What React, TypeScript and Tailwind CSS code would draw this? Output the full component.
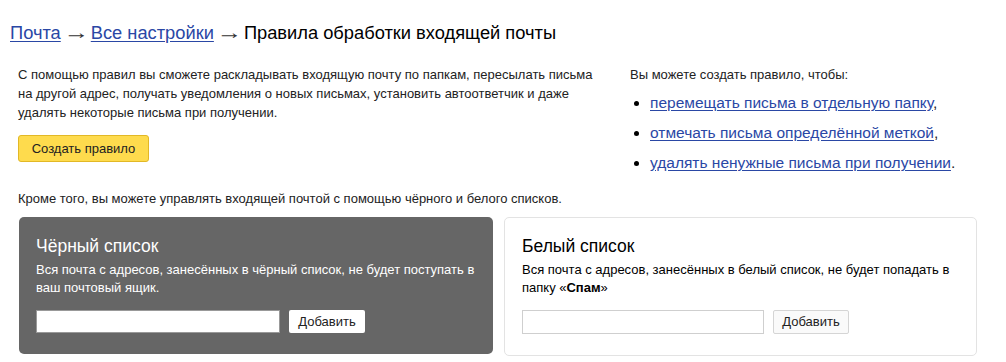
import React from 'react';

const font = { fontFamily: '"Liberation Sans", Arial, sans-serif' };

function ListCard({
  dark,
  title,
  children,
}: {
  dark?: boolean;
  title: string;
  children: React.ReactNode;
}) {
  return (
    <div
      className={
        dark
          ? 'w-[474px] h-[137px] rounded-[5px] bg-[#666666] px-[17px] pt-[18px] text-white'
          : 'w-[473px] h-[139px] rounded-[5px] border border-[#e3e3e3] bg-white px-[17px] pt-[17px] text-black'
      }
    >
      <h2 className="text-[17.5px] leading-[22px]">{title}</h2>
      <p className="mt-[4px] text-[13px] leading-[18px]">{children}</p>
      <div className="mt-[13px] flex items-center gap-[9px]">
        <input
          className={
            dark
              ? 'h-[23px] w-[244px] bg-white border border-[#999] outline-none'
              : 'h-[24px] w-[242px] bg-white border border-[#cfcfcf] outline-none'
          }
        />
        <button
          className={
            dark
              ? 'h-[23px] w-[76px] rounded-[2px] bg-white text-[13px] text-[#222]'
              : 'h-[24px] w-[76px] rounded-[2px] border border-[#d5d5d5] bg-[#fafafa] text-[13px] text-[#222]'
          }
        >
          Добавить
        </button>
      </div>
    </div>
  );
}

function Arrow() {
  return <span className="inline-block w-[30px] scale-x-[1.4] text-center text-[#333]">→</span>;
}

export default function App() {
  const linkCls = 'text-[#2a47a5] underline underline-offset-[2px]';
  return (
    <div className="w-[1006px] h-[362px] bg-white text-[#222]" style={font}>
      <div className="pl-[10px] pt-[22px] text-[18.3px] leading-[22px] text-black">
        <a className={linkCls}>Почта</a>
        <Arrow />
        <a className={linkCls}>Все настройки</a>
        <Arrow />
        Правила обработки входящей почты
      </div>

      <div className="mt-[21px] flex">
        <div className="w-[612px] pl-[18px]">
          <p className="text-[13px] leading-[19px] text-[#222]">
            С помощью правил вы сможете раскладывать входящую почту по папкам, пересылать письма
            <br />
            на другой адрес, получать уведомления о новых письмах, установить автоответчик и даже
            <br />
            удалять некоторые письма при получении.
          </p>
          <button className="mt-[13px] h-[27px] w-[131px] rounded-[3px] border border-[#e2b826] bg-[#fedb4d] text-[13px] text-[#222]">
            Создать правило
          </button>
        </div>
        <div className="pl-[18px]">
          <p className="text-[13px] leading-[19px]">Вы можете создать правило, чтобы:</p>
          <ul className="mt-[9px] flex flex-col gap-[11px] pl-[20px] text-[15.5px] leading-[19px] list-disc marker:text-black">
            <li>
              <a className={linkCls}>перемещать письма в отдельную папку</a>,
            </li>
            <li>
              <a className={linkCls}>отмечать письма определённой меткой</a>,
            </li>
            <li>
              <a className={linkCls}>удалять ненужные письма при получении</a>.
            </li>
          </ul>
        </div>
      </div>

      <p className="mt-[17px] pl-[18px] text-[13px] leading-[19px]">
        Кроме того, вы можете управлять входящей почтой с помощью чёрного и белого списков.
      </p>

      <div className="mt-[9px] flex gap-[11px] pl-[19px]">
        <ListCard dark title="Чёрный список">
          Вся почта с адресов, занесённых в чёрный список, не будет поступать в
          <br />
          ваш почтовый ящик.
        </ListCard>
        <ListCard title="Белый список">
          Вся почта с адресов, занесённых в белый список, не будет попадать в
          <br />
          папку «<b>Спам</b>»
        </ListCard>
      </div>
    </div>
  );
}
